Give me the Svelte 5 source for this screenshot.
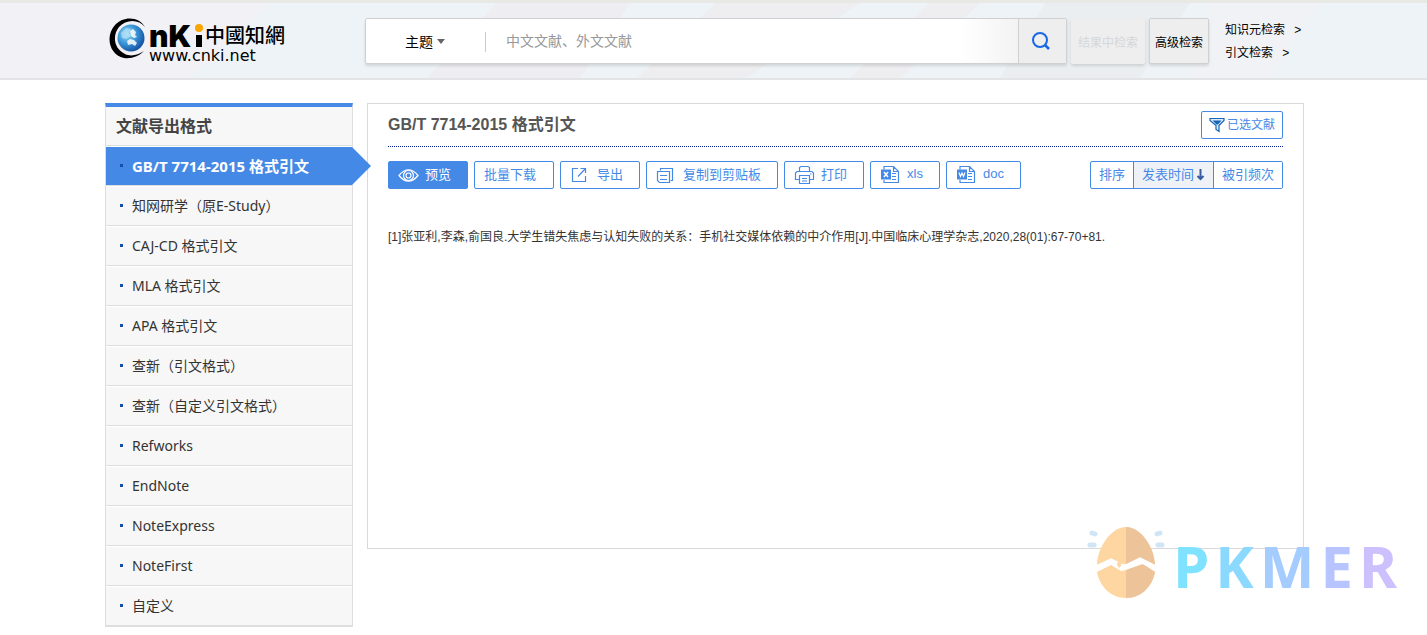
<script>
  const formats = [
    'GB/T 7714-2015 格式引文',
    '知网研学（原E-Study）',
    'CAJ-CD 格式引文',
    'MLA 格式引文',
    'APA 格式引文',
    '查新（引文格式）',
    '查新（自定义引文格式）',
    'Refworks',
    'EndNote',
    'NoteExpress',
    'NoteFirst',
    '自定义'
  ];

  const actions = [
    { icon: 'eye', label: '预览' },
    { icon: '', label: '批量下载' },
    { icon: 'export', label: '导出' },
    { icon: 'copy', label: '复制到剪贴板' },
    { icon: 'print', label: '打印' },
    { icon: 'xls', label: 'xls' },
    { icon: 'doc', label: 'doc' }
  ];

  let active = $state(0);
  let field = $state('主题');
  let query = $state('');
  let sort = $state('time');
</script>

<header>
  <svg class="stripes" viewBox="0 0 1427 75" preserveAspectRatio="none" aria-hidden="true">
    <path d="M0 0H270L190 75H0Z" fill="#f2f2f6" />
    <path d="M497 0H630L580 75H427Z" fill="#eeedf1" />
    <path d="M716 0H860L746 75H637Z" fill="#eeedef" />
    <path d="M930 0H980L900 75H850Z" fill="#eeedef" />
    <path d="M1045 0H1190L1140 75H1000Z" fill="#ebeef0" />
    <path d="M1210 0H1320L1270 75H1190Z" fill="#f1f2f6" />
  </svg>
  <div class="container top">
    <a class="logo" href="#home" aria-label="www.cnki.net">
      <svg width="180" height="48" viewBox="0 0 180 48">
        <defs>
          <radialGradient id="globe" cx=".35" cy=".35" r=".7">
            <stop offset="0" stop-color="#9fdcf5" />
            <stop offset=".5" stop-color="#3b98d8" />
            <stop offset="1" stop-color="#1450a0" />
          </radialGradient>
        </defs>
        <circle cx="22" cy="20" r="13.5" fill="url(#globe)" />
        <path d="M12 15l5-5 5 1-2 4 2 3-5 3-4-1z" fill="#b4e2f6" opacity=".7" />
        <path d="M21 13l3-2 3 3-1 3 2 2-3 1-3-2zM18 23l3-2 4 1 3 3-2 3-3-2-4 1z" fill="#fff" opacity=".85" />
        <path d="M36 9C31-1 15-3 6 7-4 18 0 37 15 40c8 1 15-2 20-7-6 4-13 6-19 3C5 31 3 18 10 9 17 1 30 1 36 9z" fill="#000" />
        <text x="40" y="29" class="mark">nK</text>
        <rect x="87" y="17" width="6" height="12" />
        <circle cx="90" cy="10" r="4" fill="#f9a602" />
        <text x="96" y="25" class="name">中國知網</text>
        <text x="40" y="43" class="site">www.cnki.net</text>
      </svg>
    </a>
    <form class="search" onsubmit={(e) => e.preventDefault()}>
      <div class="field">
        <select bind:value={field} aria-label="检索字段">
          <option>主题</option>
          <option>篇名</option>
          <option>作者</option>
        </select>
      </div>
      <input type="text" bind:value={query} placeholder="中文文献、外文文献" aria-label="检索词" />
      <button type="submit" aria-label="检索">
        <svg width="20" height="20" viewBox="0 0 20 20" fill="none" stroke="#1967e8" stroke-width="2">
          <circle cx="9" cy="9" r="7" />
          <path d="M14 14l4 4" stroke-width="2.5" />
        </svg>
      </button>
    </form>
    <button class="side-btn wide" disabled>结果中检索</button>
    <button class="side-btn">高级检索</button>
    <nav class="links">
      <a href="#knowledge">知识元检索 <span>&gt;</span></a>
      <a href="#citation">引文检索 <span>&gt;</span></a>
    </nav>
  </div>
</header>

<div class="container body">
  <aside>
    <h2>文献导出格式</h2>
    <ul>
      {#each formats as name, i}
        <li class:active={i === active}>
          <a href="#format-{i}" onclick={() => (active = i)}>{name}</a>
        </li>
      {/each}
    </ul>
  </aside>

  <main>
    <div class="title">
      <h1>{formats[active]}</h1>
      <button class="selected">
        <svg width="16" height="16" viewBox="0 0 16 16">
          <path d="M1 1.5h14v2l-5 5v6l-3-2V8.500L1 3.500z" fill="#dcebfa" stroke="#1763b5" stroke-width="1.2" />
          <path d="M3.500 3.500h9L9 7.500H7.500z" fill="#1763b5" />
        </svg>
        <span>已选文献</span>
      </button>
    </div>

    <div class="toolbar">
      {#each actions as { icon, label }}
        <button class="action" class:primary={icon === 'eye'} class:plain={!icon}>
          {#if icon}
            <svg width="36" height="26" viewBox="0 0 36 26" fill="none" stroke="currentColor" stroke-width="1.2">
              {#if icon === 'eye'}
                <path d="M10 13.500Q19.500 2 29 13.500Q19.500 25 10 13.500z" />
                <circle cx="19.5" cy="13.5" r="5" />
                <circle cx="19.5" cy="13.5" r="2.5" />
              {:else if icon === 'export'}
                <path d="M17 6.500H11.500V19.500H24.500V14M17 14.500L24 7M19.500 6.500H24.500V11" />
              {:else if icon === 'copy'}
                <path d="M13.500 8.500V6.500H25.500V18.500H23.500" />
                <path d="M10.500 9.500H22.500V20.500H12.500L10.500 18.500zM13 13.500H20M13 17.500H20" />
              {:else if icon === 'print'}
                <path d="M14.500 9.500V5.500L16 4.500H23L24.500 5.500V9.500M14 17.500H10.500V11L12 9.500H27L28.500 11V17.500H25M14.500 13.500H24.500V21.500H14.500zM17 16.500H22M17 19H22M25 12H26.500" />
              {:else}
                <path d="M13 7.500V4.500H22.500L27.500 9.500V20.500H13V18M22.500 4.500V9.500H27.500M21 11.500H25M21 14.500H25M21 17.500H25" />
                <rect x="10" y="7.5" width="10" height="10" fill="currentColor" stroke="none" />
                {#if icon === 'xls'}
                  <path d="M13 10l4 5M17 10l-4 5" stroke="#fff" stroke-width="1.5" />
                {:else}
                  <path d="M12 10.500l1.500 4L15 11l1.500 3.500 1.500-4" stroke="#fff" />
                {/if}
              {/if}
            </svg>
          {/if}<span>{label}</span>
        </button>
      {/each}

      <div class="sort">
        <span>排序</span>
        <button class:on={sort === 'time'} onclick={() => (sort = 'time')}>
          发表时间<svg width="11" height="14" viewBox="0 0 11 14" fill="none" stroke="#3a5ba0" stroke-width="2">
            <path d="M6.500 1v10M3.500 8l3 3 3-3" />
          </svg>
        </button>
        <button class:on={sort === 'cited'} onclick={() => (sort = 'cited')}>被引频次</button>
      </div>
    </div>

    <p>[1]张亚利,李森,俞国良.大学生错失焦虑与认知失败的关系：手机社交媒体依赖的中介作用[J].中国临床心理学杂志,2020,28(01):67-70+81.</p>
  </main>
</div>

<div class="watermark">
  <svg width="78" height="76" viewBox="0 0 78 76">
    <path d="M39 2C24 2 10 23 10 41L21 35l8 3 3 5 4-4 5 3 15-8 12 7C68 23 54 2 39 2z" fill="#fdd6a2" />
    <path d="M39 2v38l2 2 15-8 12 7C68 23 54 2 39 2z" fill="#edc49a" />
    <path d="M10 47l14-7 10 6 5-1 17-6 12 8C65 62 54 73 39 73S13 62 10 47z" fill="#fdd6a2" />
    <path d="M39 45l17-6 12 8C65 62 54 73 39 73z" fill="#edc49a" />
    <path d="M9 43l15-7 6 3M34 41l5 1 14-7 16 8" fill="none" stroke="#fff" stroke-width="5" />
    <path d="M5 8l3 1M3 20h4M73 8l-3 1M75 20h-4" stroke="#d0e5f5" stroke-width="5" stroke-linecap="round" />
  </svg>
  <div class="letters">
    <span class="p">P</span><span class="k">K</span><span class="m">M</span><span class="e">E</span><span class="r">R</span>
  </div>
</div>

<style>
  :global(body) {
    font-family: 'Liberation Sans', 'Noto Sans CJK SC', sans-serif;
    font-size: 12px;
    color: #333;
    background: #fff;
  }

  a {
    color: inherit;
    text-decoration: none;
  }

  button,
  input,
  select {
    font: inherit;
    box-sizing: border-box;
  }

  button {
    cursor: pointer;
    white-space: nowrap;
  }

  header {
    position: relative;
    padding-right: 17px;
    background: #eef3f7;
    border-top: 3px solid #e8e8e5;
    border-bottom: 2px solid #e3e4e6;
  }

  .stripes {
    position: absolute;
    inset: 0;
    width: 100%;
    height: 100%;
  }

  .container {
    max-width: 1200px;
    margin: 0 auto;
  }

  .top {
    position: relative;
    display: flex;
    align-items: flex-start;
    padding: 15px 0 13px;
  }

  .logo {
    width: 256px;
    height: 46px;
    padding-left: 4px;
  }

  .mark {
    font: 900 30px Inter, sans-serif;
  }

  .name {
    font: 500 20px 'Noto Sans CJK TC', sans-serif;
  }

  .site {
    font: 16px 'DejaVu Sans', sans-serif;
  }

  .search {
    display: flex;
    width: 702px;
    height: 46px;
    box-sizing: border-box;
    background: linear-gradient(90deg, #fff 85%, #f3f3f3 93%);
    border: 1px solid #cfd0d2;
    border-radius: 2px;
    box-shadow: 0 2px 3px rgba(0, 0, 0, 0.12);
  }

  .field {
    position: relative;
    display: flex;
    align-items: center;
    width: 120px;
    padding-left: 39px;
    margin: 13px 0 11px;
    box-sizing: border-box;
    border-right: 1px solid #ccc;
  }

  .field::after {
    content: '';
    position: absolute;
    left: 71px;
    top: 7px;
    border: 4px solid transparent;
    border-top: 5px solid #666;
    border-bottom: 0;
    pointer-events: none;
  }

  .field select {
    width: 48px;
    padding: 0;
    border: 0;
    background: none;
    appearance: none;
    font-size: 14px;
    color: #000;
  }

  .search input {
    flex: 1;
    min-width: 0;
    padding: 0 20px;
    border: 0;
    background: none;
    font-size: 14px;
  }

  .search input::placeholder {
    color: #999;
  }

  .search button {
    display: flex;
    align-items: center;
    justify-content: center;
    width: 48px;
    padding: 0 4px 0 0;
    border: 0;
    border-left: 1px solid #cfd0d2;
    background: #eee;
  }

  .side-btn {
    width: 60px;
    height: 46px;
    margin-left: 4px;
    padding: 0;
    color: #000;
    background: #eee;
    border: 1px solid #cfd0d2;
    border-radius: 2px;
    box-shadow: 0 2px 3px rgba(0, 0, 0, 0.12);
  }

  .side-btn.wide {
    width: 74px;
  }

  .side-btn:disabled {
    color: #d5d7d9;
    border-color: #eceeef;
  }

  .links {
    display: flex;
    flex-direction: column;
    margin-left: 16px;
    padding-top: 1px;
    line-height: 23px;
    color: #000;
    white-space: nowrap;
  }

  .links span {
    margin-left: 6px;
  }

  .body {
    display: flex;
    align-items: flex-start;
    gap: 14px;
    padding: 23px 17px 8px 0;
  }

  aside {
    width: 248px;
    flex: none;
    box-sizing: border-box;
    background: #f7f7f7;
    border: 1px solid #dedede;
    border-top: 4px solid #4589e7;
    font-family: 'Noto Sans', 'Noto Sans CJK SC', sans-serif;
  }

  h2 {
    margin: 0;
    padding-left: 10px;
    font-size: 16px;
    line-height: 38px;
    color: #444;
    border-bottom: 1px solid #dedede;
  }

  ul {
    margin: 0;
    padding: 0;
    list-style: none;
  }

  li {
    position: relative;
    border-top: 1px solid #fff;
    border-bottom: 1px solid #dedede;
  }

  li a {
    display: flex;
    align-items: center;
    height: 38px;
    padding: 0 0 2px 14px;
    box-sizing: border-box;
    font-size: 14px;
  }

  li a::before {
    content: '';
    width: 3px;
    height: 3px;
    margin-right: 9px;
    background: #1450a8;
  }

  .active a {
    color: #fff;
    font-size: 15px;
    font-weight: bold;
    background: #4589e7;
  }

  .active::after {
    content: '';
    position: absolute;
    top: 0;
    left: 100%;
    border: 19px solid transparent;
    border-left-color: #4589e7;
    border-right: 0;
  }

  main {
    flex: 1;
    min-width: 0;
    min-height: 444px;
    margin-right: 1px;
    padding: 0 20px;
    border: 1px solid #d9d9d9;
  }

  .title {
    display: flex;
    align-items: center;
    justify-content: space-between;
    height: 42px;
    border-bottom: 1px dotted #001a8c;
  }

  h1 {
    margin: 0;
    padding-bottom: 4px;
    font-size: 16px;
    color: #555;
  }

  .selected {
    display: flex;
    align-items: center;
    gap: 2px;
    height: 28px;
    padding: 0 7px;
    color: #4589e7;
    background: #fff;
    border: 1px solid #4589e7;
    border-radius: 2px;
  }

  .toolbar {
    display: flex;
    gap: 6px;
    padding-top: 14px;
    font-size: 13px;
  }

  .action {
    display: flex;
    align-items: center;
    height: 28px;
    padding: 0 16px 0 0;
    color: #4589e7;
    background: #fff;
    border: 1px solid #4589e7;
    border-radius: 2px;
  }

  .action span,
  .selected span {
    padding-bottom: 3px;
  }

  .plain {
    padding: 0 17px 0 9px;
  }

  .primary {
    color: #fff;
    background: #4589e7;
  }

  .sort {
    display: flex;
    height: 28px;
    box-sizing: border-box;
    margin-left: auto;
    color: #4589e7;
    border: 1px solid #4589e7;
    border-radius: 2px;
    line-height: 26px;
    white-space: nowrap;
  }

  .sort span {
    padding: 0 8px;
  }

  .sort button {
    display: flex;
    align-items: center;
    padding: 0 8px;
    color: inherit;
    background: #fff;
    border: 0;
    border-left: 1px solid #4589e7;
  }

  .sort .on {
    background: #eef2f7;
  }

  p {
    margin: 38px 0 0;
    line-height: 20px;
  }

  .watermark {
    position: absolute;
    top: 525px;
    right: 30px;
    display: flex;
    gap: 8px;
    pointer-events: none;
  }

  .letters {
    display: flex;
    gap: 6px;
    font: bold 58px/82px 'Noto Sans', sans-serif;
  }

  .p {
    color: #7fe3ff;
  }

  .k {
    color: #8bd9ff;
  }

  .m {
    color: #a5ccff;
  }

  .e {
    color: #b8c4ff;
  }

  .r {
    color: #ccc0ff;
  }
</style>
